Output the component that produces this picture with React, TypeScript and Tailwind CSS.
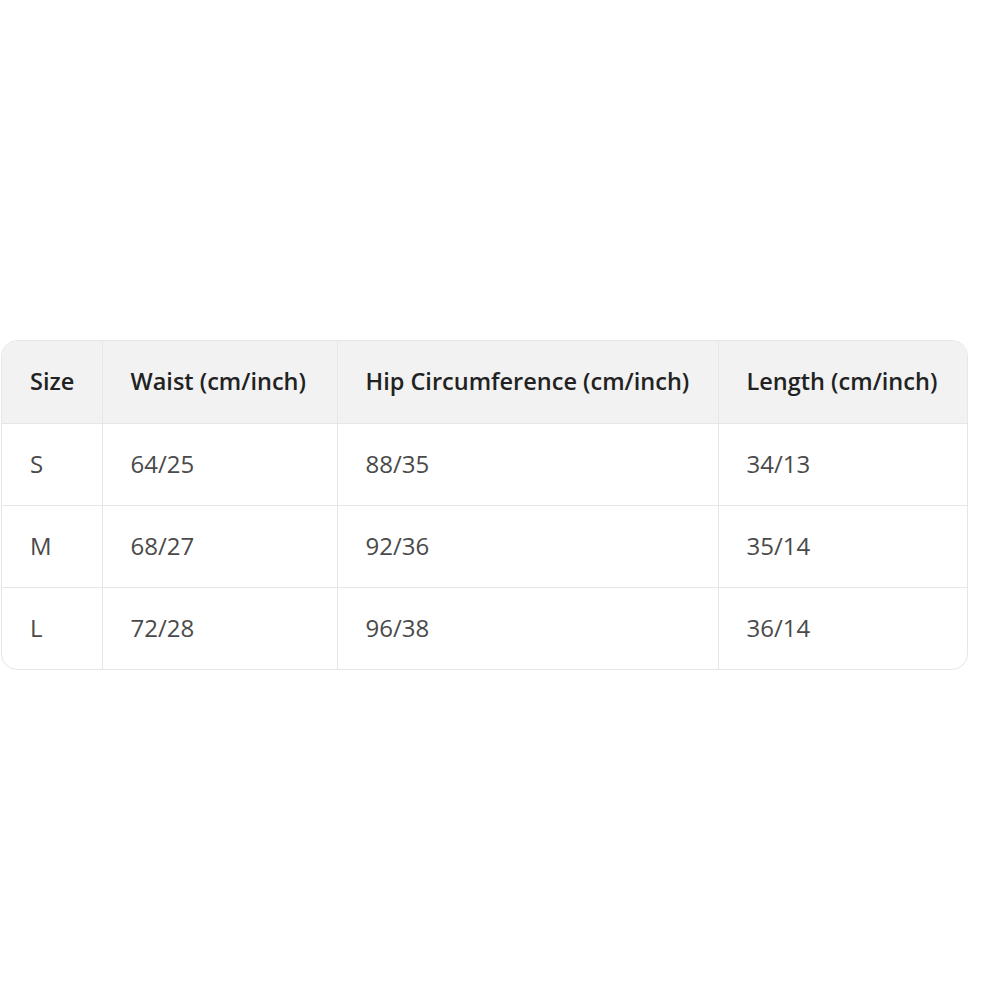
const rows = [
  { size: "S", waist: "64/25", hip: "88/35", length: "34/13" },
  { size: "M", waist: "68/27", hip: "92/36", length: "35/14" },
  { size: "L", waist: "72/28", hip: "96/38", length: "36/14" },
];

const App = () => {
  return (
    <div className="min-h-screen bg-white pt-[340px] pl-[1px]" style={{ fontFamily: '"Open Sans", "Noto Sans", sans-serif' }}>
      <div className="w-[967px] rounded-[16px] border border-[#e6e6e6] overflow-hidden">
        <table className="w-full border-collapse table-fixed">
          <colgroup>
            <col className="w-[100px]" />
            <col className="w-[235px]" />
            <col className="w-[381px]" />
            <col />
          </colgroup>
          <thead>
            <tr className="bg-[#f2f2f2] h-[82px]">
              <th className="text-left font-semibold text-[23.5px] text-[#222] pl-[28px]">Size</th>
              <th className="text-left font-semibold text-[23.5px] text-[#222] pl-[28px] border-l border-[#e6e6e6]">Waist (cm/inch)</th>
              <th className="text-left font-semibold text-[23.5px] text-[#222] pl-[28px] border-l border-[#e6e6e6]">Hip Circumference (cm/inch)</th>
              <th className="text-left font-semibold text-[23.5px] text-[#222] pl-[28px] border-l border-[#e6e6e6]">Length (cm/inch)</th>
            </tr>
          </thead>
          <tbody>
            {rows.map((r) => (
              <tr key={r.size} className="h-[82px] border-t border-[#e6e6e6]">
                <td className="text-[24px] text-[#4a4a4a] pl-[28px]">{r.size}</td>
                <td className="text-[24px] text-[#4a4a4a] pl-[28px] border-l border-[#e6e6e6]">{r.waist}</td>
                <td className="text-[24px] text-[#4a4a4a] pl-[28px] border-l border-[#e6e6e6]">{r.hip}</td>
                <td className="text-[24px] text-[#4a4a4a] pl-[28px] border-l border-[#e6e6e6]">{r.length}</td>
              </tr>
            ))}
          </tbody>
        </table>
      </div>
    </div>
  );
};

export default App;
